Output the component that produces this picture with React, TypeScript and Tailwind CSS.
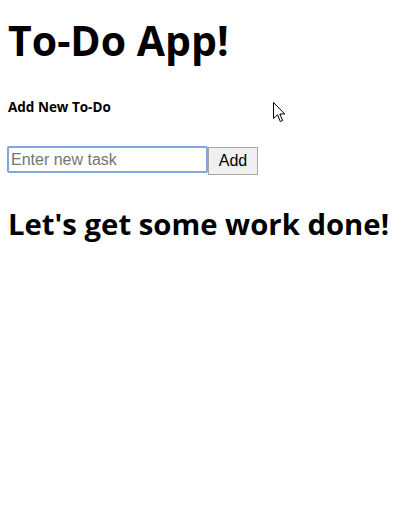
export default function App() {
  return (
    <div className="relative min-h-[532px] bg-white px-2 text-black">
      <h1 className="m-0 pt-[14px] font-['Open_Sans',sans-serif] text-[41px] font-bold leading-[52px]">To-Do App!</h1>
      <h5 className="m-0 mt-[32px] font-['Open_Sans',sans-serif] text-[13.5px] font-bold leading-[18px]">Add New To-Do</h5>
      <div className="-ml-px mt-[30px] flex items-start font-['Liberation_Sans',Arial,sans-serif]">
        <input
          type="text"
          placeholder="Enter new task"
          className="h-[27px] w-[201px] rounded-[2px] border-2 border-[#7ea6e0] px-[2px] pt-[1px] text-[16px] text-black outline-none placeholder:text-[#757575]"
        />
        <button className="mt-px h-[28px] w-[50px] border border-[#a6a6a6] bg-[#f0f0f0] text-[16px] text-black">
          Add
        </button>
      </div>
      <h2 className="m-0 mt-[29px] font-['Open_Sans',sans-serif] text-[29.3px] font-bold leading-[40px]">Let's get some work done!</h2>
      <svg className="absolute left-[273px] top-[102px]" width="13" height="21" viewBox="0 0 13 21">
        <path d="M0.5 0.5 L0.5 16.5 L4.5 12.8 L7.3 19.5 L9.6 18.5 L6.9 12 L11.8 12 Z" fill="white" stroke="black" strokeWidth="1" strokeLinejoin="miter" />
      </svg>
    </div>
  );
}
